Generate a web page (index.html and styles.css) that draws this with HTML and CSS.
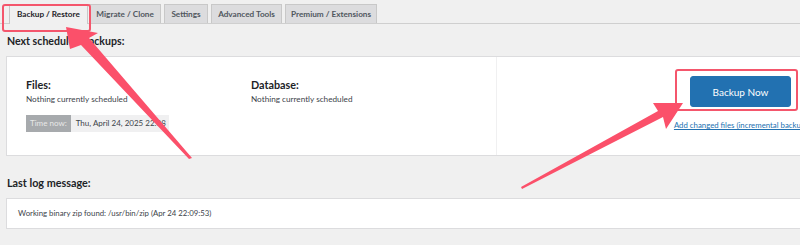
FILE: index.html
```html
<!DOCTYPE html>
<html>
<head>
<meta charset="UTF-8">
<title>Backup / Restore</title>
<link rel="stylesheet" href="styles.css">
</head>
<body>
<div class="page">
  <nav class="tabs">
    <a class="tab active">Backup / Restore</a>
    <a class="tab">Migrate / Clone</a>
    <a class="tab">Settings</a>
    <a class="tab">Advanced Tools</a>
    <a class="tab">Premium / Extensions</a>
  </nav>

  <h3 class="section-title">Next scheduled backups:</h3>
  <div class="panel schedule">
    <div class="col">
      <h4>Files:</h4>
      <p>Nothing currently scheduled</p>
      <div class="timenow"><span class="label">Time now:</span><span class="value">Thu, April 24, 2025 22:08</span></div>
    </div>
    <div class="col">
      <h4>Database:</h4>
      <p>Nothing currently scheduled</p>
    </div>
    <div class="col actions">
      <button class="btn-primary">Backup Now</button>
      <a class="incremental" href="#">Add changed files (incremental backup)</a>
    </div>
  </div>

  <h3 class="section-title log-title">Last log message:</h3>
  <div class="panel log">Working binary zip found: /usr/bin/zip (Apr 24 22:09:53)</div>

  <svg class="marks" width="800" height="245" viewBox="0 0 800 245">
    <rect x="3" y="5" width="87" height="26" rx="2" fill="none" stroke="#f4566c" stroke-width="2"/>
    <rect x="676" y="70" width="121" height="40" rx="2" fill="none" stroke="#f4566c" stroke-width="2"/>
    <polygon fill="#fb506a" points="66,27 98,33 89,38 192,158 189,159 81,45 70,49"/>
    <polygon fill="#fb506a" points="683,103 666,129 663,117 522,189 521,187 658,111 653,103"/>
  </svg>
</div>
</body>
</html>
```

FILE: styles.css
```css
html,body{margin:0;padding:0}
body{background:#f0f0f0;color:#1d2327;font-family:Lato,"Noto Sans",sans-serif;overflow:hidden;width:800px;height:245px}
.page{position:relative;width:800px;height:245px}

.tabs{display:flex;gap:3.5px;padding:4px 0 0 9px;border-bottom:1px solid #cfcfcf;height:19px}
.tab{display:block;height:18px;line-height:19px;padding:0 6px;font-size:8.2px;font-weight:700;color:#50575e;background:#dcdcde;border:1px solid #c8c8c8;border-bottom:none;white-space:nowrap}
.tab:last-child{padding:0 4.5px}
.tab.active{background:#f0f0f0;color:#1d2327;height:19px;padding:0 7px;margin-right:-2px}

.section-title{margin:9px 0 0 7px;font-size:10.6px;font-weight:700;line-height:17px;color:#1d2327}

.panel{background:#fff;border:1px solid #dcdcde;margin-left:6px}

.schedule{display:grid;grid-template-columns:225px 264px 488px;width:977px;height:98px;margin-top:6px}
.col{padding:20px 0 0 19px}
.col h4{margin:0;font-size:10.8px;font-weight:700;line-height:15px;color:#1d2327}
.col p{margin:1px 0 0;font-size:8.2px;line-height:12px;color:#3c434a}
.actions{border-left:1px solid #f0f0f1;padding:19px 0 0;display:flex;flex-direction:column;align-items:center}

.timenow{display:inline-flex;margin-top:10px;font-size:8px;line-height:17px}
.timenow .label{background:#a7aaad;color:#e8e8e8;padding:0 4px}
.timenow .value{background:#f0f0f1;color:#3c434a;padding:0 3px 0 5px}

.btn-primary{width:101px;height:31px;background:#2271b1;color:#fff;border:1px solid #2271b1;border-radius:3px;font-family:inherit;font-size:10px}
.incremental{margin-top:13px;font-size:7.8px;color:#2271b1;text-decoration:underline;white-space:nowrap}

.log-title{margin-top:18px;font-size:10.8px}
.log{margin-top:7px;width:960px;height:29px;line-height:29px;padding-left:11px;font-size:7.8px;color:#3c434a}

.marks{position:absolute;left:0;top:0;pointer-events:none}
```
